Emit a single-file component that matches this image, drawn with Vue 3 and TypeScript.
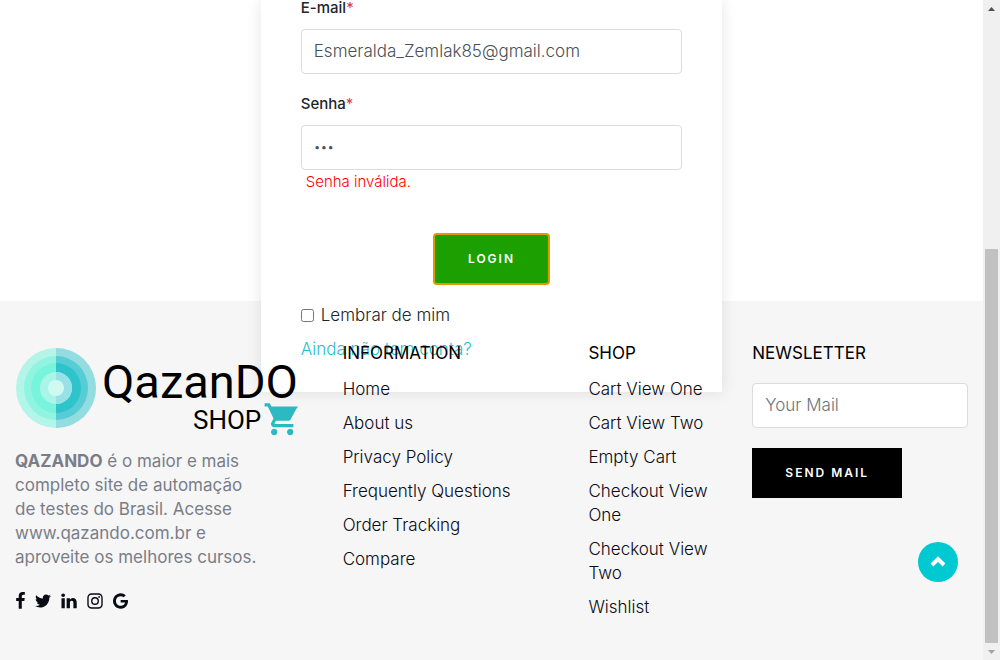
<script setup lang="ts">
import { ref } from 'vue'

interface SocialLink {
  name: string
  viewBox: string
  width: number
  path: string
}

const email = ref('Esmeralda_Zemlak85@gmail.com')
const password = ref('123')
const remember = ref(false)
const newsletter = ref('')

const information: string[] = [
  'Home',
  'About us',
  'Privacy Policy',
  'Frequently Questions',
  'Order Tracking',
  'Compare',
]

const shop: string[] = [
  'Cart View One',
  'Cart View Two',
  'Empty Cart',
  'Checkout View One',
  'Checkout View Two',
  'Wishlist',
]

const socials: SocialLink[] = [
  {
    name: 'Facebook',
    viewBox: '479 0 864 1792',
    width: 9,
    path: 'M1343 12v264h-157q-86 0-116 36t-30 108v189h293l-39 296h-254v759h-306v-759h-255v-296h255v-218q0-186 104-288.5t277-102.5q147 0 228 12z',
  },
  {
    name: 'Twitter',
    viewBox: '108 0 1576 1792',
    width: 16,
    path: 'M1684 408q-67 98-162 167 1 14 1 42 0 130-38 259.5t-115.5 248.5-184.5 210.5-258 146-323 54.5q-271 0-496-145 35 4 78 4 225 0 401-138-105-2-188-64.5t-114-159.5q33 5 61 5 43 0 85-11-112-23-185.5-111.5t-73.5-205.5v-4q68 38 146 41-66-44-105-115t-39-154q0-88 44-163 121 149 294.5 238.5t371.5 99.5q-8-38-8-74 0-134 94.5-228.5t228.5-94.5q140 0 236 102 109-21 205-78-37 115-142 178 93-10 186-50z',
  },
  {
    name: 'LinkedIn',
    viewBox: '128 0 1536 1792',
    width: 16,
    path: 'M477 625v991h-330v-991h330zm21-306q1 73-50.5 122t-135.5 49h-2q-82 0-132-49t-50-122q0-74 51.5-122.5t134.5-48.5 133 48.5 51 122.5zm1166 729v568h-329v-530q0-105-40.5-164.5t-126.5-59.5q-63 0-105.5 34.5t-63.5 85.5q-11 30-11 81v553h-329q2-399 2-647t-1-296l-1-48h329v144h-2q20-32 41-56t56.5-52 87-43.5 114.5-15.5q171 0 275 113.5t104 332.5z',
  },
  {
    name: 'Instagram',
    viewBox: '128 0 1536 1792',
    width: 16,
    path: 'M560 128h672a432 432 0 0 1 432 432v672a432 432 0 0 1-432 432h-672a432 432 0 0 1-432-432v-672a432 432 0 0 1 432-432zM570 266a304 304 0 0 0-304 304v652a304 304 0 0 0 304 304h652a304 304 0 0 0 304-304v-652a304 304 0 0 0-304-304zM896 502a394 394 0 1 1 0 788a394 394 0 1 1 0-788zM896 640a256 256 0 1 0 0 512a256 256 0 1 0 0-512zM1306 394a92 92 0 1 1 0 184a92 92 0 1 1 0-184z',
  },
  {
    name: 'Google',
    viewBox: '128 0 1505 1792',
    width: 15,
    path: 'M896 786h725q12 67 12 128 0 217-91 387.5t-259.5 266.5-386.5 96q-157 0-299-60.5t-245-163.5-163.5-245-60.5-299 60.5-299 163.5-245 245-163.5 299-60.5q300 0 515 201l-209 201q-123-119-306-119-129 0-238.5 65t-173.5 176.5-64 243.5 64 243.5 173.5 176.5 238.5 65q87 0 160-24t120-60 82-82 51.5-87 22.5-78h-436v-264z',
  },
]
</script>

<template>
  <div class="window">
    <div class="page">
      <main>
        <form class="card" @submit.prevent>
          <label class="label" for="email">E-mail<span class="required">*</span></label>
          <input id="email" v-model="email" class="field" type="email" />
          <label class="label next" for="password">Senha<span class="required">*</span></label>
          <input id="password" v-model="password" class="field" type="password" />
          <p class="error">Senha inválida.</p>
          <button class="login" type="submit">LOGIN</button>
          <div class="remember">
            <input id="remember" v-model="remember" type="checkbox" />
            <label for="remember">Lembrar de mim</label>
          </div>
          <a class="register" href="#">Ainda não tem conta?</a>
        </form>
      </main>

      <footer>
        <div class="columns">
          <section class="about">
            <a href="#" aria-label="Qazando Shop">
              <svg class="logo" viewBox="0 0 286 92" width="286" height="92">
                <circle cx="41" cy="42" r="40" fill="#b3f5e8" />
                <circle cx="41" cy="42" r="32" fill="#90f4e0" />
                <circle cx="41" cy="42" r="25" fill="#79f4dc" />
                <path d="M41 2a40 40 0 0 1 0 80z" fill="#93dde1" />
                <path d="M41 10a32 32 0 0 1 0 64z" fill="#56cdd4" />
                <path d="M41 17a25 25 0 0 1 0 50z" fill="#2fc3cb" />
                <circle cx="41" cy="42" r="16" fill="#a9f6e8" />
                <path d="M41 26a16 16 0 0 1 0 32z" fill="#97e2e6" />
                <circle cx="41" cy="42" r="8" fill="#d0f9f2" />
                <text class="wordmark" x="87" y="52">QazanDO</text>
                <text class="submark" x="178" y="83">SHOP</text>
                <path
                  transform="translate(248 54) scale(1.6)"
                  fill="#2db9c1"
                  d="M7 18c-1.1 0-1.99.9-1.99 2S5.9 22 7 22s2-.9 2-2-.9-2-2-2zM1 2v2h2l3.6 7.59-1.35 2.45c-.16.28-.25.61-.25.96 0 1.1.9 2 2 2h12v-2H7.42c-.14 0-.25-.11-.25-.25l.03-.12.9-1.63h7.45c.75 0 1.41-.41 1.75-1.03l3.58-6.49L22 4H5.21l-.94-2H1zm16 16c-1.1 0-1.99.9-1.99 2s.89 2 1.99 2 2-.9 2-2-.9-2-2-2z"
                />
              </svg>
            </a>
            <p>
              <b>QAZANDO</b> é o maior e mais completo site de automação de testes do Brasil. Acesse
              www.qazando.com.br e aproveite os melhores cursos.
            </p>
            <div class="socials">
              <a v-for="s in socials" :key="s.name" href="#" :aria-label="s.name">
                <svg :viewBox="s.viewBox" :width="s.width" height="18">
                  <path :d="s.path" fill="#0a0a14" fill-rule="evenodd" />
                </svg>
              </a>
            </div>
          </section>

          <nav aria-label="Information">
            <h3>INFORMATION</h3>
            <ul>
              <li v-for="item in information" :key="item"><a href="#">{{ item }}</a></li>
            </ul>
          </nav>

          <nav aria-label="Shop">
            <h3>SHOP</h3>
            <ul>
              <li v-for="item in shop" :key="item"><a href="#">{{ item }}</a></li>
            </ul>
          </nav>

          <form class="newsletter" @submit.prevent>
            <h3>NEWSLETTER</h3>
            <input v-model="newsletter" class="field" type="email" placeholder="Your Mail" aria-label="Your Mail" />
            <button class="send" type="submit">SEND MAIL</button>
          </form>
        </div>
      </footer>
      <button class="to-top" type="button" aria-label="Back to top">
        <svg viewBox="0 0 16 12" width="16" height="12">
          <path d="M2 9l6-6 6 6" fill="none" stroke="#fff" stroke-width="4" />
        </svg>
      </button>
    </div>

    <div class="scrollbar" aria-hidden="true">
      <svg viewBox="0 0 7 4" width="7" height="4"><path d="M0 4L3.500 0L7 4z" fill="#505050" /></svg>
      <div class="track"><div class="thumb"></div></div>
      <svg viewBox="0 0 7 4" width="7" height="4"><path d="M0 0L3.500 4L7 0z" fill="#a3a3a3" /></svg>
    </div>
  </div>
</template>

<style>
body {
  margin: 0;
  background: #fff;
}
</style>

<style scoped>
* {
  box-sizing: border-box;
}

.window {
  display: flex;
  height: 100vh;
  overflow: hidden;
  font: 300 17px/24px Inter, "Open Sans", sans-serif;
  color: #212529;
}

.page {
  position: relative;
  display: flex;
  flex: 1;
  flex-direction: column;
  min-width: 0;
}

a {
  color: inherit;
  text-decoration: none;
}

button,
input {
  font: inherit;
}

p,
h3,
ul {
  margin: 0;
  padding: 0;
}

.card {
  position: relative;
  z-index: 1;
  display: flex;
  flex-direction: column;
  width: calc(50% - 30px);
  margin: 0 auto -91px;
  padding: 0 40px 31px;
  background: #fff;
  box-shadow: 0 0 15px rgba(0, 0, 0, 0.1);
}

.label {
  margin-bottom: 13px;
  font-size: 15px;
  line-height: 16px;
  font-weight: 500;
}

.label.next {
  margin-top: 22px;
}

.required {
  color: #dc3545;
  font-weight: 400;
}

.field {
  display: block;
  width: 100%;
  height: 45px;
  padding: 0 12px 2px;
  border: 1px solid #dcdcdc;
  border-radius: 4px;
  background: #fff;
  color: #495057;
}

.field[type="password"] {
  font-size: 12px;
}

.field::placeholder {
  color: #6c757d;
  opacity: 1;
}

.error {
  margin-left: 5px;
  color: #f00;
  font-size: 15px;
}

.login,
.send {
  border: 0;
  color: #fff;
  font-size: 12px;
  font-weight: 600;
  letter-spacing: 2px;
}

.login {
  align-self: center;
  width: 117px;
  height: 52px;
  margin-top: 39px;
  border: 2px solid #e59700;
  border-radius: 4px;
  background: #1c9f00;
}

.remember {
  display: flex;
  align-items: center;
  gap: 7px;
  margin-top: 18px;
}

.remember input {
  width: 13px;
  height: 13px;
  margin: 0;
}

.register {
  align-self: flex-start;
  margin-top: 10px;
  color: #1fc0c8;
}

footer {
  flex: 1;
  padding-top: 40px;
  background: #f6f6f6;
}

.columns {
  position: relative;
  z-index: 2;
  display: grid;
  grid-template-columns: 4fr 3fr 2fr 3fr;
}

.columns > * {
  min-width: 0;
  padding: 0 15px;
}

.columns > .about {
  padding-top: 5px;
}

.logo {
  display: block;
}

.wordmark {
  font: 400 47px Roboto, sans-serif;
}

.submark {
  font: 400 26px Roboto, sans-serif;
}

.about p {
  max-width: 250px;
  margin-top: 11px;
  color: #7a7d88;
  font-weight: 400;
}

.socials {
  display: flex;
  gap: 10px;
  margin-top: 23px;
  padding-left: 1px;
}

.socials svg {
  display: block;
}

h3 {
  color: #000;
  font-size: 17px;
  line-height: 24px;
  font-weight: 400;
}

ul {
  display: flex;
  flex-direction: column;
  gap: 10px;
  margin-top: 12px;
  color: #0a0a14;
  list-style: none;
}

.newsletter .field {
  margin-top: 18px;
}

.send {
  width: 150px;
  height: 50px;
  margin-top: 20px;
  background: #000;
}

.to-top {
  position: absolute;
  right: 25px;
  bottom: 78px;
  z-index: 3;
  display: grid;
  place-items: center;
  width: 40px;
  height: 40px;
  padding: 0;
  border: 0;
  border-radius: 50%;
  background: #00c9d1;
}

.scrollbar {
  display: flex;
  flex-direction: column;
  align-items: center;
  gap: 7px;
  width: 17px;
  padding: 7px 0 6px;
  background: #f0f0f0;
}

.track {
  display: flex;
  flex: 1;
  align-items: flex-end;
}

.thumb {
  width: 13px;
  height: 63%;
  background: #c1c1c1;
}
</style>
